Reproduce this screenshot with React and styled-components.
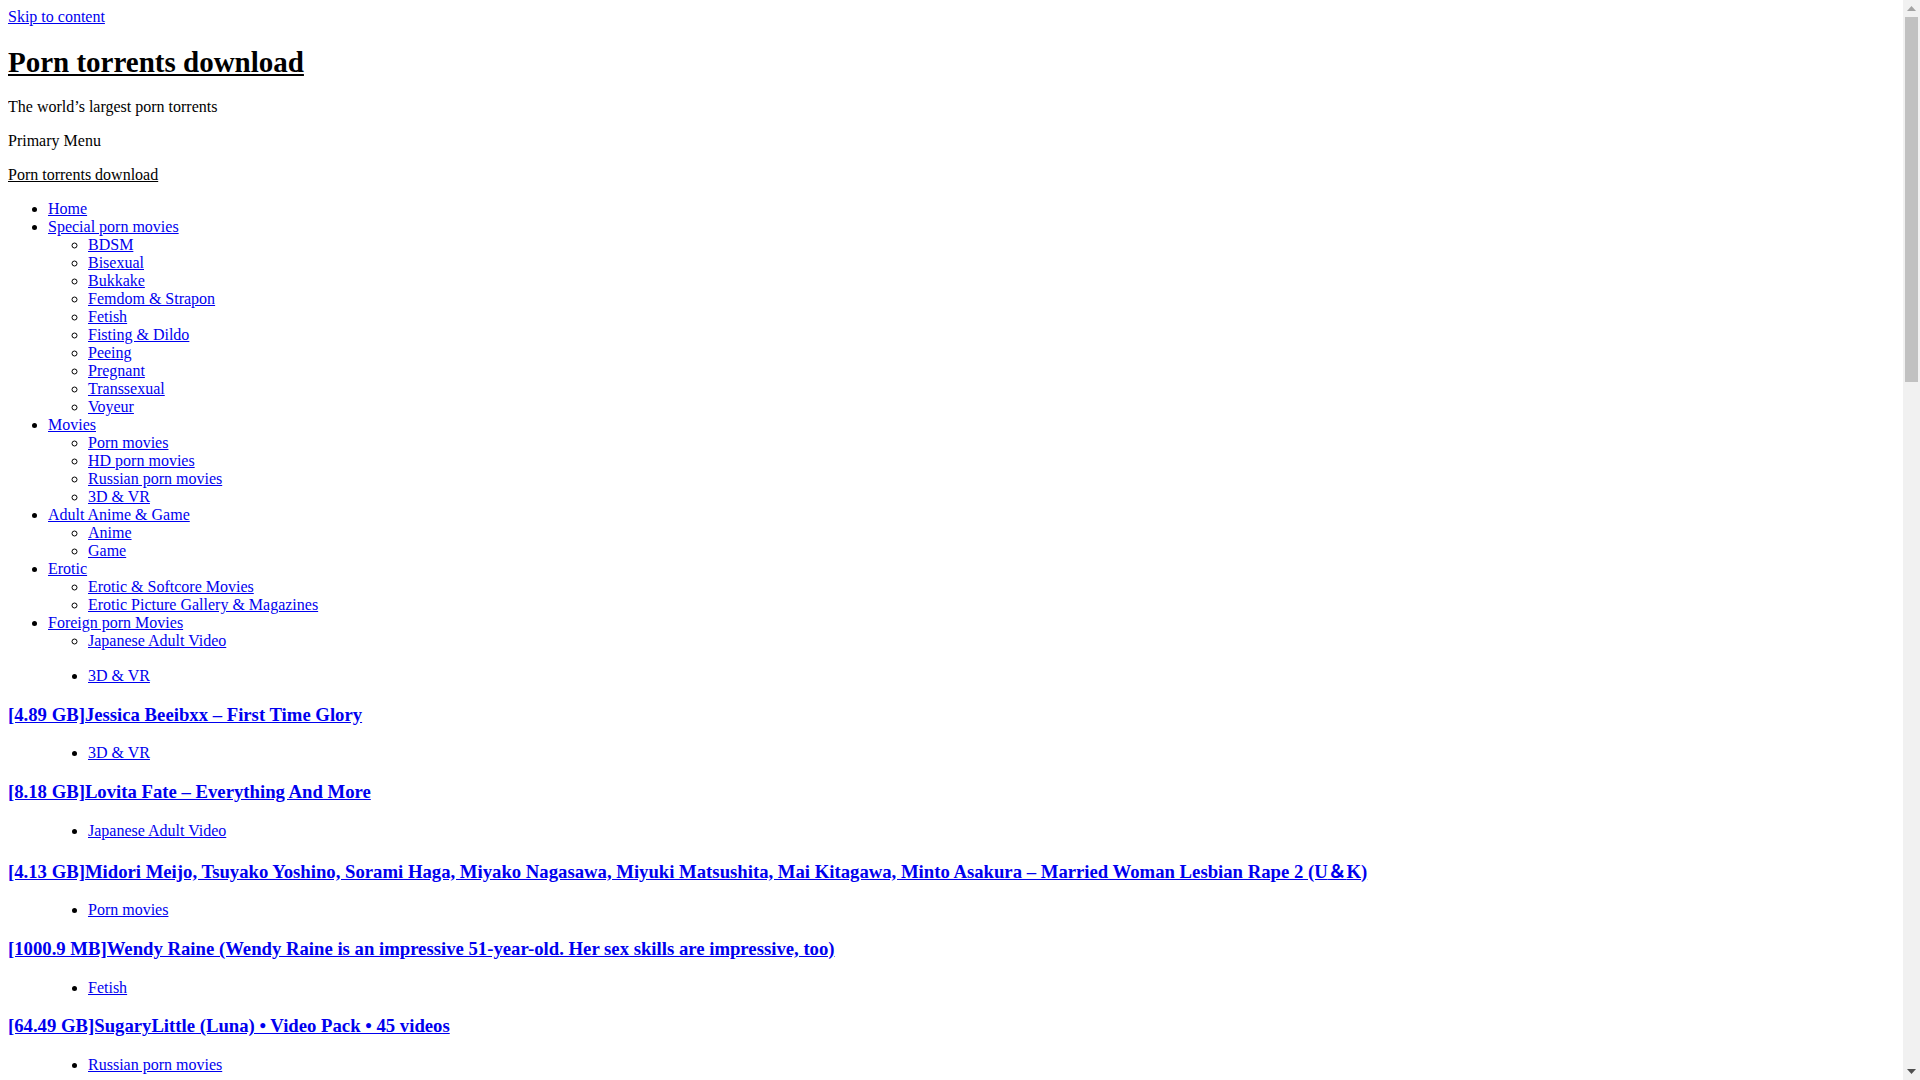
import React from 'react';
import styled, { createGlobalStyle } from 'styled-components';

const GlobalStyle = createGlobalStyle`
  body {
    margin: 8px;
    font-family: "Liberation Serif", "Noto Sans CJK JP", serif;
    font-size: 16px;
    color: #000;
    background: #fff;
  }
`;

// browser scrollbar strip, drawn over the right edge of the page
const Scrollbar = styled.div`
  position: fixed;
  top: 0;
  right: 0;
  width: 17px;
  height: 100vh;
  background: #f1f1f1;
  display: flex;
  flex-direction: column;
`;

const ScrollButton = styled.div`
  height: 17px;
  display: flex;
  align-items: center;
  justify-content: center;
  flex: none;
`;

const ScrollTrack = styled.div`
  flex: 1;
  padding: 0 2px;
`;

const ScrollThumb = styled.div`
  height: 365px;
  background: #c1c1c1;
`;

const SkipLink = styled.a`
  color: #0000ee;
  text-decoration: underline;
`;

const SiteTitle = styled.h1`
  font-size: 29px;
  font-weight: bold;
  margin: 20px 0 19px;
`;

const PlainLink = styled.a`
  color: inherit;
  text-decoration: underline;
`;

const Para = styled.p`
  margin: 16px 0;
`;

const NavList = styled.ul`
  margin: ${(p) => (p.$sub ? '0' : '16px 0 17px')};
  padding-left: 40px;
  list-style: ${(p) => (p.$sub ? 'circle' : 'disc')};
`;

const Item = styled.li`
  line-height: 18px;
`;

const NavLink = styled.a`
  color: #0000ee;
  text-decoration: underline;
`;

const Posts = styled.main`
  min-height: 2420px;
`;

const CategoryList = styled.ul`
  margin: 16px 0;
  padding-left: 80px;
  list-style: disc;
`;

const PostTitle = styled.h3`
  font-size: 18.72px;
  line-height: 22px;
  font-weight: bold;
  margin: 18.72px 0;
`;

const Wide = styled.span`
  font-family: "Noto Sans CJK JP", sans-serif;
  line-height: 1.2;
`;

const Arrow = ({ down, color }) => (
  <svg width="9" height="5" viewBox="0 0 9 5">
    <path d={down ? 'M0 0H9L4.5 5Z' : 'M0 5H9L4.5 0Z'} fill={color} />
  </svg>
);

const menu = [
  { label: 'Home' },
  {
    label: 'Special porn movies',
    children: ['BDSM', 'Bisexual', 'Bukkake', 'Femdom & Strapon', 'Fetish', 'Fisting & Dildo', 'Peeing', 'Pregnant', 'Transsexual', 'Voyeur'],
  },
  { label: 'Movies', children: ['Porn movies', 'HD porn movies', 'Russian porn movies', '3D & VR'] },
  { label: 'Adult Anime & Game', children: ['Anime', 'Game'] },
  { label: 'Erotic', children: ['Erotic & Softcore Movies', 'Erotic Picture Gallery & Magazines'] },
  { label: 'Foreign porn Movies', children: ['Japanese Adult Video'] },
];

const posts = [
  { cat: '3D & VR', title: '[4.89 GB]Jessica Beeibxx – First Time Glory' },
  { cat: '3D & VR', title: '[8.18 GB]Lovita Fate – Everything And More' },
  {
    cat: 'Japanese Adult Video',
    title: (
      <>
        [4.13 GB]Midori Meijo, Tsuyako Yoshino, Sorami Haga, Miyako Nagasawa, Miyuki Matsushita, Mai Kitagawa, Minto Asakura – Married Woman Lesbian Rape 2 (U<Wide>＆</Wide>K)
      </>
    ),
  },
  { cat: 'Porn movies', title: '[1000.9 MB]Wendy Raine (Wendy Raine is an impressive 51-year-old. Her sex skills are impressive, too)' },
  { cat: 'Fetish', title: '[64.49 GB]SugaryLittle (Luna) • Video Pack • 45 videos' },
  { cat: 'Russian porn movies', title: null },
];

export default function App() {
  return (
    <>
      <GlobalStyle />
      <SkipLink href="#content">Skip to content</SkipLink>
      <header>
        <SiteTitle>
          <PlainLink href="#">Porn torrents download</PlainLink>
        </SiteTitle>
        <Para>The world’s largest porn torrents</Para>
        <Para>Primary Menu</Para>
        <nav>
          <Para>
            <PlainLink href="#">Porn torrents download</PlainLink>
          </Para>
          <NavList>
            {menu.map((m) => (
              <Item key={m.label}>
                <NavLink href="#">{m.label}</NavLink>
                {m.children && (
                  <NavList $sub>
                    {m.children.map((c) => (
                      <Item key={c}>
                        <NavLink href="#">{c}</NavLink>
                      </Item>
                    ))}
                  </NavList>
                )}
              </Item>
            ))}
          </NavList>
        </nav>
      </header>
      <Posts id="content">
        {posts.map((p, i) => (
          <article key={i}>
            <CategoryList>
              <Item>
                <NavLink href="#">{p.cat}</NavLink>
              </Item>
            </CategoryList>
            {p.title && (
              <PostTitle>
                <NavLink href="#">{p.title}</NavLink>
              </PostTitle>
            )}
          </article>
        ))}
      </Posts>
      <Scrollbar>
        <ScrollButton>
          <Arrow color="#a3a3a3" />
        </ScrollButton>
        <ScrollTrack>
          <ScrollThumb />
        </ScrollTrack>
        <ScrollButton>
          <Arrow down color="#505050" />
        </ScrollButton>
      </Scrollbar>
    </>
  );
}
